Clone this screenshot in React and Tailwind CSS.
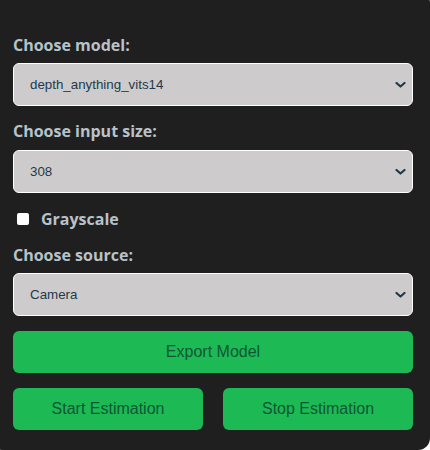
import React from "react";

function Chevron() {
  return (
    <svg width="11" height="7" viewBox="0 0 11 7" className="pointer-events-none absolute right-[3px] top-1/2 -translate-y-1/2 mr-[1px]">
      <path d="M1.5 1.5 L5.5 5 L9.5 1.5" fill="none" stroke="#1e3a48" strokeWidth="2.2" strokeLinecap="round" strokeLinejoin="round" />
    </svg>
  );
}

function Select({ value }) {
  return (
    <div className="relative h-[43px] w-full rounded-[6px] border border-white bg-[#cdcbcc]">
      <div className="flex h-full items-center pl-[16px] text-[13.333px] text-[#1e3a48]" style={{ fontFamily: '"Liberation Sans", Arial, sans-serif' }}>
        {value}
      </div>
      <div className="absolute right-[2px] top-0 h-full w-[16px]">
        <Chevron />
      </div>
    </div>
  );
}

function Label({ children, className = "" }) {
  return (
    <div className={"text-[16px] font-bold leading-[20px] text-[#b7c2ca] " + className} style={{ fontFamily: '"Open Sans", sans-serif' }}>
      {children}
    </div>
  );
}

function Button({ children, className = "" }) {
  return (
    <div className={"flex h-[42px] items-center justify-center rounded-[6px] bg-[#1db954] text-[16px] text-[#0e5733] " + className} style={{ fontFamily: '"Liberation Sans", Arial, sans-serif' }}>
      {children}
    </div>
  );
}

export default function App() {
  return (
    <div className="h-[450px] w-[430px] overflow-hidden bg-white">
      <div className="-ml-[10px] -mt-[9px] h-[459px] w-[440px] rounded-[12px] bg-[#1f1f1f] pl-[23px] pr-[17px] pt-[44px]">
        <Label className="mb-[8px]">Choose model:</Label>
        <Select value="depth_anything_vits14" />
        <Label className="mb-[9px] mt-[15px]">Choose input size:</Label>
        <Select value="308" />
        <div className="mt-[16px] flex items-center">
          <div className="ml-[4px] h-[12px] w-[12px] rounded-[2px] bg-white" />
          <div className="ml-[12px] text-[16px] font-bold leading-[20px] text-[#b7c2ca]" style={{ fontFamily: '"Open Sans", sans-serif' }}>
            Grayscale
          </div>
        </div>
        <Label className="mb-[8px] mt-[16px]">Choose source:</Label>
        <Select value="Camera" />
        <Button className="mt-[15px]">Export Model</Button>
        <div className="mt-[15px] grid grid-cols-2 gap-[20px]">
          <Button>Start Estimation</Button>
          <Button>Stop Estimation</Button>
        </div>
      </div>
    </div>
  );
}
